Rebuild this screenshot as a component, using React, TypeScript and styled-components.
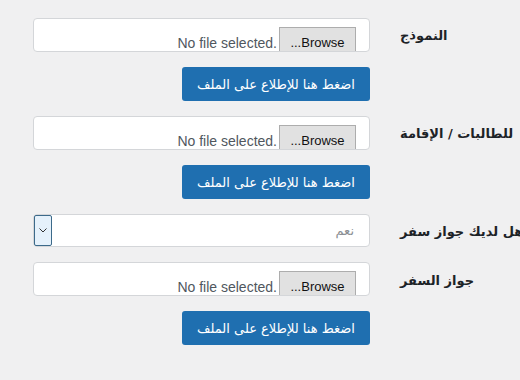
import React from "react";
import styled, { createGlobalStyle } from "styled-components";

const GlobalStyle = createGlobalStyle`
  html, body {
    margin: 0;
    background: #f0f0f1;
    font-family: "Liberation Sans", "DejaVu Sans", sans-serif;
    overflow: hidden;
  }
`;

const Form = styled.form`
  display: flex;
  flex-direction: column;
  gap: 15px;
  padding: 18px 0 0 33px;
  width: 520px;
  box-sizing: border-box;
`;

const Row = styled.div`
  display: grid;
  grid-template-columns: 337px auto;
  column-gap: 30px;
  align-items: center;
`;

const Label = styled.label<{ $shift?: number }>`
  direction: rtl;
  text-align: left;
  white-space: nowrap;
  font-family: "DejaVu Sans", sans-serif;
  font-weight: bold;
  font-size: 13px;
  color: #1d2327;
  margin-top: ${(p) => p.$shift ?? 0}px;
`;

const FileBox = styled.div`
  height: 34px;
  box-sizing: border-box;
  background: #fff;
  border: 1px solid #d4d6d9;
  border-radius: 4px;
  overflow: hidden;
  display: flex;
  justify-content: flex-end;
  align-items: flex-start;
  padding: 8px 13px 0 0;
`;

const FileName = styled.span`
  direction: ltr;
  font-size: 14px;
  color: #50575e;
  margin-top: 8px;
  margin-right: 2px;
`;

const Browse = styled.span`
  direction: rtl;
  box-sizing: border-box;
  width: 77px;
  height: 28px;
  padding-top: 7px;
  text-align: center;
  background: #e1e1e1;
  border: 1px solid #adadad;
  font-size: 13px;
  color: #111;
`;

const ActionButton = styled.button`
  justify-self: end;
  width: 188px;
  height: 34px;
  border: none;
  border-radius: 3px;
  background: #1f6fb0;
  color: #fff;
  direction: rtl;
  font-family: "DejaVu Sans", sans-serif;
  font-size: 13px;
  cursor: pointer;
`;

const SelectBox = styled.div`
  height: 33px;
  box-sizing: border-box;
  background: #fff;
  border: 1px solid #d4d6d9;
  border-radius: 4px;
  display: flex;
  align-items: center;
  justify-content: space-between;
  padding-right: 15px;
`;

const Arrow = styled.span`
  width: 18px;
  height: 31px;
  box-sizing: border-box;
  border: 1px solid #3c6a8a;
  border-radius: 2px;
  background: #e5f1fb;
  display: flex;
  align-items: center;
  justify-content: center;
`;

const SelectValue = styled.span`
  direction: rtl;
  font-family: "DejaVu Sans", sans-serif;
  font-size: 13px;
  color: #8c8f94;
`;

const FileField = () => (
  <FileBox>
    <FileName>No file selected.</FileName>
    <Browse>Browse...</Browse>
  </FileBox>
);

const OpenButton = () => (
  <Row>
    <ActionButton type="button">اضغط هنا للإطلاع على الملف</ActionButton>
  </Row>
);

export default function App() {
  return (
    <>
      <GlobalStyle />
      <Form>
        <Row>
          <FileField />
          <Label>النموذج</Label>
        </Row>
        <OpenButton />

        <Row>
          <FileField />
          <Label>للطالبات / الإقامة</Label>
        </Row>
        <OpenButton />

        <Row>
          <SelectBox>
            <Arrow>
              <svg width="8" height="5" viewBox="0 0 8 5">
                <path d="M0.5 0.5 L4 4 L7.5 0.5" fill="none" stroke="#333" strokeWidth="1" />
              </svg>
            </Arrow>
            <SelectValue>نعم</SelectValue>
          </SelectBox>
          <Label $shift={2}>هل لديك جواز سفر</Label>
        </Row>

        <Row>
          <FileField />
          <Label $shift={2}>جواز السفر</Label>
        </Row>
        <OpenButton />
      </Form>
    </>
  );
}
